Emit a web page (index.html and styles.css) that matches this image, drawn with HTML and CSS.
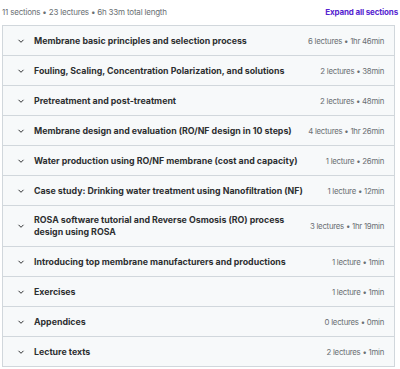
FILE: index.html
```html
<!DOCTYPE html>
<html lang="en">
<head>
  <meta charset="UTF-8">
  <title>Course content</title>
  <link rel="stylesheet" href="styles.css">
</head>
<body>
  <div class="curriculum">
    <div class="summary">
      <span>11 sections • 23 lectures • 6h 33m total length</span>
      <a href="#" class="expand">Expand all sections</a>
    </div>

    <div class="sections">
      <div class="section">
        <span class="chev"><svg viewBox="0 0 10 10"><path d="M2.5 3.8 5 6.3 7.5 3.8"/></svg></span>
        <span class="title">Membrane basic principles and selection process</span>
        <span class="meta">6 lectures • 1hr 46min</span>
      </div>
      <div class="section">
        <span class="chev"><svg viewBox="0 0 10 10"><path d="M2.5 3.8 5 6.3 7.5 3.8"/></svg></span>
        <span class="title">Fouling, Scaling, Concentration Polarization, and solutions</span>
        <span class="meta">2 lectures • 38min</span>
      </div>
      <div class="section">
        <span class="chev"><svg viewBox="0 0 10 10"><path d="M2.5 3.8 5 6.3 7.5 3.8"/></svg></span>
        <span class="title">Pretreatment and post-treatment</span>
        <span class="meta">2 lectures • 48min</span>
      </div>
      <div class="section">
        <span class="chev"><svg viewBox="0 0 10 10"><path d="M2.5 3.8 5 6.3 7.5 3.8"/></svg></span>
        <span class="title">Membrane design and evaluation (RO/NF design in 10 steps)</span>
        <span class="meta">4 lectures • 1hr 26min</span>
      </div>
      <div class="section">
        <span class="chev"><svg viewBox="0 0 10 10"><path d="M2.5 3.8 5 6.3 7.5 3.8"/></svg></span>
        <span class="title">Water production using RO/NF membrane (cost and capacity)</span>
        <span class="meta">1 lecture • 26min</span>
      </div>
      <div class="section">
        <span class="chev"><svg viewBox="0 0 10 10"><path d="M2.5 3.8 5 6.3 7.5 3.8"/></svg></span>
        <span class="title">Case study: Drinking water treatment using Nanofiltration (NF)</span>
        <span class="meta">1 lecture • 12min</span>
      </div>
      <div class="section">
        <span class="chev"><svg viewBox="0 0 10 10"><path d="M2.5 3.8 5 6.3 7.5 3.8"/></svg></span>
        <span class="title">ROSA software tutorial and Reverse Osmosis (RO) process design using ROSA</span>
        <span class="meta">3 lectures • 1hr 19min</span>
      </div>
      <div class="section">
        <span class="chev"><svg viewBox="0 0 10 10"><path d="M2.5 3.8 5 6.3 7.5 3.8"/></svg></span>
        <span class="title">Introducing top membrane manufacturers and productions</span>
        <span class="meta">1 lecture • 1min</span>
      </div>
      <div class="section">
        <span class="chev"><svg viewBox="0 0 10 10"><path d="M2.5 3.8 5 6.3 7.5 3.8"/></svg></span>
        <span class="title">Exercises</span>
        <span class="meta">1 lecture • 1min</span>
      </div>
      <div class="section">
        <span class="chev"><svg viewBox="0 0 10 10"><path d="M2.5 3.8 5 6.3 7.5 3.8"/></svg></span>
        <span class="title">Appendices</span>
        <span class="meta">0 lectures • 0min</span>
      </div>
      <div class="section">
        <span class="chev"><svg viewBox="0 0 10 10"><path d="M2.5 3.8 5 6.3 7.5 3.8"/></svg></span>
        <span class="title">Lecture texts</span>
        <span class="meta">2 lectures • 1min</span>
      </div>
    </div>
  </div>
</body>
</html>
```

FILE: styles.css
```css
/* ------------- RESET & BASE ------------- */
* { margin: 0; padding: 0; box-sizing: border-box; }
body {
  font-family: 'Inter', 'Noto Sans', sans-serif;
  background: #fff;
  color: #2d2f31;
}
a { text-decoration: none; }

/* ------------- SUMMARY LINE ------------- */
.curriculum { width: 400px; padding: 0 2px; }
.summary {
  height: 25px;
  display: flex; align-items: center; justify-content: space-between;
  font-size: 8px; letter-spacing: -0.2px; color: #6a6f73;
  padding-bottom: 2px;
}
.expand { color: #5624d0; font-weight: 700; font-size: 8px; letter-spacing: -0.15px; }

/* ------------- SECTIONS ------------- */
.sections {
  width: 393px;
  border: 1px solid #d1d7dc;
  border-bottom: none;
}
.section {
  display: flex; align-items: center;
  min-height: 30px;
  padding: 8px 10px 8px 13px;
  background: #f7f9fa;
  border-bottom: 1px solid #d1d7dc;
}
.chev { width: 10px; height: 10px; margin-right: 8px; flex-shrink: 0; }
.chev svg { width: 10px; height: 10px; display: block; }
.chev path { fill: none; stroke: #2d2f31; stroke-width: 1; }
.title {
  flex: 1; font-weight: 700; font-size: 8.8px; line-height: 12px;
  padding-right: 8px;
}
.meta {
  font-size: 7.8px; letter-spacing: -0.25px; color: #6a6f73; white-space: nowrap;
}
```
